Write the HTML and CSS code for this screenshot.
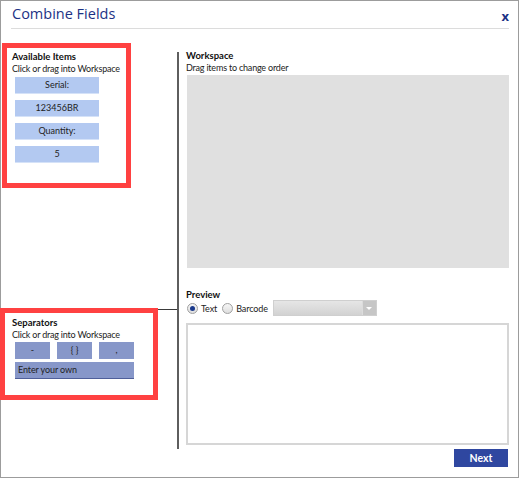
FILE: index.html
```html
<!DOCTYPE html>
<html>
<head>
<meta charset="utf-8">
<link rel="stylesheet" href="styles.css">
</head>
<body>
<div class="window">
  <div class="header">
    <div class="title">Combine Fields</div>
    <div class="close">x</div>
  </div>
  <div class="content">
    <div class="left">
      <div class="avail">
        <div class="heading">Available Items</div>
        <div class="sub">Click or drag into Workspace</div>
        <div class="items">
          <div class="item">Serial:</div>
          <div class="item">123456BR</div>
          <div class="item">Quantity:</div>
          <div class="item">5</div>
        </div>
      </div>
      <div class="hline"></div>
      <div class="seps">
        <div class="heading">Separators</div>
        <div class="sub">Click or drag into Workspace</div>
        <div class="sep-row">
          <div class="sep">-</div>
          <div class="sep">{ }</div>
          <div class="sep">,</div>
        </div>
        <div class="own">Enter your own</div>
      </div>
    </div>
    <div class="divider"></div>
    <div class="right">
      <div class="heading">Workspace</div>
      <div class="sub">Drag items to change order</div>
      <div class="workspace"></div>
      <div class="heading preview-head">Preview</div>
      <div class="radio-row">
        <span class="radio checked"></span><span class="rlabel">Text</span>
        <span class="radio"></span><span class="rlabel">Barcode</span>
        <div class="dropdown"><div class="dd-arrow"></div></div>
      </div>
      <div class="preview"></div>
      <div class="actions"><div class="next">Next</div></div>
    </div>
  </div>
</div>
</body>
</html>
```

FILE: styles.css
```css
html, body {
  margin: 0;
  padding: 0;
  background: #ffffff;
}
body {
  font-family: "Lato", "Open Sans", sans-serif;
  color: #1a1a1a;
}
.window {
  width: 519px;
  height: 478px;
  box-sizing: border-box;
  border: 1px solid #9c9c9c;
  display: flex;
  flex-direction: column;
  background: #fff;
}
.header {
  height: 27px;
  margin: 0 9px 0 10px;
  border-bottom: 1px solid #dcdcdc;
  display: flex;
  justify-content: space-between;
  align-items: flex-start;
}
.title {
  font-family: "Open Sans", sans-serif;
  font-size: 14.5px;
  color: #1c3285;
  line-height: 18px;
  margin-top: 4px;
  margin-left: 1px;
}
.close {
  font-family: "Open Sans", sans-serif;
  font-size: 13px;
  font-weight: bold;
  color: #1c3285;
  line-height: 14px;
  margin-top: 8px;
  margin-right: 0;
}
.content {
  display: flex;
  flex: 1;
}
.left {
  width: 176px;
  display: flex;
  flex-direction: column;
}
.heading {
  font-size: 9.5px;
  font-weight: bold;
  line-height: 12px;
  color: #111;
  white-space: nowrap;
}
.sub {
  font-size: 9px;
  letter-spacing: -0.2px;
  line-height: 11px;
  color: #222;
  white-space: nowrap;
}
.avail {
  margin-top: 14px;
  margin-left: 1px;
  width: 129px;
  height: 145px;
  box-sizing: border-box;
  border: 5px solid #ff4141;
  padding: 3px 0 0 5px;
}
.items {
  display: flex;
  flex-direction: column;
  gap: 6px;
  margin-top: 3px;
  margin-left: 3px;
}
.item {
  width: 84px;
  height: 17px;
  background: #b3c9f1;
  border-bottom: 1px solid #d5e2f8;
  box-sizing: border-box;
  font-size: 9px;
  line-height: 16px;
  text-align: center;
  color: #222;
}
.hline {
  margin-top: 121px;
  height: 1px;
  background: #3a3a3a;
}
.seps {
  margin-top: -2px;
  margin-left: -1px;
  width: 158px;
  height: 92px;
  box-sizing: border-box;
  border: 5px solid #ff4141;
  padding: 4px 0 0 7px;
  background: #fff;
}
.sep-row {
  display: flex;
  gap: 7px;
  margin-top: 2px;
  margin-left: 3px;
}
.sep {
  width: 35px;
  height: 17px;
  background: #8797c9;
  font-size: 9px;
  line-height: 16px;
  text-align: center;
  color: #222;
}
.own {
  margin-top: 3px;
  margin-left: 3px;
  width: 119px;
  height: 17px;
  box-sizing: border-box;
  background: #8797c9;
  border-bottom: 1px solid #4f5f9a;
  font-size: 9px;
  letter-spacing: -0.1px;
  line-height: 16px;
  padding-left: 3px;
  color: #222;
}
.divider {
  width: 2px;
  margin-top: 23px;
  height: 397px;
  background: #5e5e5e;
}
.right {
  flex: 1;
  padding: 21px 9px 0 7px;
  display: flex;
  flex-direction: column;
}
.workspace {
  margin-top: 2px;
  margin-left: 1px;
  height: 193px;
  background: #e0e0e0;
}
.preview-head {
  margin-top: 21px;
}
.radio-row {
  display: flex;
  align-items: center;
  height: 16px;
  margin-top: -1px;
}
.radio {
  width: 9px;
  height: 9px;
  border-radius: 50%;
  border: 1px solid #a0a0a0;
  background: linear-gradient(#f6f6f6, #dedede);
  position: relative;
  margin-left: 1px;
}
.radio.checked::after {
  content: "";
  position: absolute;
  left: 2px;
  top: 2px;
  width: 5px;
  height: 5px;
  border-radius: 50%;
  background: #1b3a8c;
}
.rlabel {
  font-size: 9px;
  letter-spacing: -0.1px;
  color: #222;
  margin-left: 3px;
  margin-right: 4px;
}
.dropdown {
  margin-left: 1px;
  width: 104px;
  height: 16px;
  box-sizing: border-box;
  border: 1px solid #cfcfcf;
  background: linear-gradient(#e6e6e6, #d2d2d2);
  display: flex;
  justify-content: flex-end;
}
.dd-arrow {
  width: 13px;
  height: 100%;
  background: #c6c6c6;
  border-left: 1px solid #dcdcdc;
  display: flex;
  align-items: center;
  justify-content: center;
}
.dd-arrow::after {
  content: "";
  width: 0;
  height: 0;
  border-left: 3px solid transparent;
  border-right: 3px solid transparent;
  border-top: 3px solid #ffffff;
}
.preview {
  margin-top: 7px;
  height: 122px;
  box-sizing: border-box;
  border: 2px solid #d6d6d6;
}
.actions {
  display: flex;
  justify-content: flex-end;
  margin-top: 4px;
  padding-right: 1px;
}
.next {
  width: 54px;
  height: 18px;
  background: #2f47a0;
  color: #fff;
  font-size: 10.5px;
  font-weight: bold;
  line-height: 18px;
  text-align: center;
}
```
